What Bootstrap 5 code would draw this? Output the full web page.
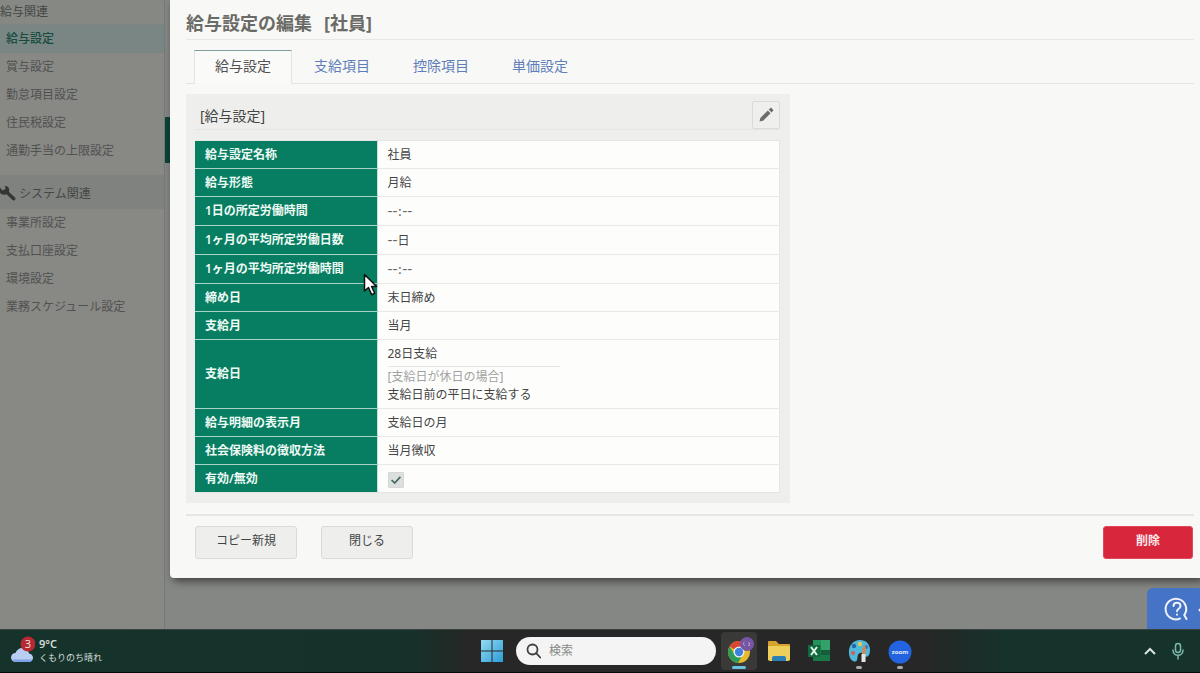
<!DOCTYPE html>
<html lang="ja">
<head>
<meta charset="utf-8">
<meta name="viewport" content="width=device-width, initial-scale=1">
<title>給与設定の編集</title>
<link href="https://cdn.jsdelivr.net/npm/bootstrap@5.3.0/dist/css/bootstrap.min.css" rel="stylesheet">
<style>
  body { font: 12px/18px "Noto Sans", "Noto Sans CJK JP", sans-serif; color: #444; background: #858784; }
  button, input { font: inherit; }

  /* dimmed application behind the dialog */
  .side-menu { flex: 0 0 165px; background: #888885; border-right: 1px solid #777976; }
  .side-head { background: #80827f; color: #454745; height: 34px; }
  .side-head.clipped { height: 25px; background: #868884; border-bottom: 1px solid #7f8380; }
  .side-group { margin-top: 10px; }
  .side-menu a { display: block; height: 28px; line-height: 28px; padding-left: 6px; color: #505250; text-decoration: none; }
  .side-menu a.current { background: #7a8683; color: #154c40; font-weight: 500; }
  .gutter { flex: 0 0 5px; padding-top: 117px; }
  .gutter span { display: block; height: 46px; background: #0c4337; }

  /* dialog */
  .dialog-sheet { background: #f8f9f6; border-bottom-left-radius: 4px; padding: 0 6px 19px 16px; box-shadow: 3px 3px 8px rgba(0,0,0,.55); }
  .dialog-title { font-size: 18px; line-height: 28px; font-weight: 700; color: #6a6b67; margin: 0; padding: 9px 0 2px; border-bottom: 1px solid #e6e8e6; }
  .nav-tabs { --bs-nav-tabs-border-color: #e3e6e4; padding: 10px 0 0 8px; gap: 1px; }
  .nav-tabs .nav-link { font-size: 14px; line-height: 20px; padding: 5px 20px 7px; border-radius: 0; color: #5f7dba; border-width: 1px; }
  .nav-tabs .nav-link.active { background: #fafbf9; color: #505050; border-color: #e0e4e3; border-top: 1px solid #809c9c; border-bottom-color: #f8f9f6; }
  .setting-panel { max-width: 604px; background: #eeeeec; padding: 7px 10px 10px 9px; margin-top: 10px; }
  .panel-top { border-bottom: 1px solid #e4e6e5; margin-bottom: 10px; }
  .panel-top h2 { font-size: 14px; line-height: 20px; margin: 0; font-weight: 400; padding: 2px 0 0 5px; }
  .edit-btn { width: 28px; height: 28px; padding: 0; border: 1px solid #d9dcdb; border-radius: 2px; background: #efefed; line-height: 0; }

  .setting-table { width: 100%; border: 1px solid #e4e6e5; border-left: 0; background: #fdfefc; }
  .setting-table th { width: 182px; height: 28px; background: #077d61; color: #eefaf5; font-weight: 600; padding: 0 10px; border-bottom: 1px solid #a9d3c6; border-right: 1px solid #c8ded7; }
  .setting-table td { padding: 0 10px; border-bottom: 1px solid #e6e9e7; }
  .setting-table .taller th { height: 29px; }
  .setting-table tr:last-child > * { border-bottom: 0; }
  .unset { font: 14px/18px "DejaVu Sans", sans-serif; color: #666; }
  .pay-day { width: 172px; padding: 5px 0 3px; margin-bottom: 1px; border-bottom: 1px solid #e4e6e4; }
  .rest-day { color: #a0a19f; }
  .setting-table .form-check-input { width: 16px; height: 16px; border: 1px solid #d4d9d8; border-radius: 1px; margin: 2px 0 0; display: block; }
  .setting-table .form-check-input:checked { background-color: #dcdfde; background-image: url("data:image/svg+xml,%3csvg xmlns='http://www.w3.org/2000/svg' viewBox='0 0 16 16'%3e%3cpath fill='none' stroke='%23456b65' stroke-width='2' d='M3 8l3.500 3.500L13 4.500'/%3e%3c/svg%3e"); background-size: contain; }

  .dialog-foot { margin-top: 11px; border-top: 2px solid #e4e7e5; padding: 10px 1px 0 9px; }
  .foot-btn { height: 33px; line-height: 16px; font-size: 12px; padding: 0 20px 3px; border: 1px solid #d8dbda; border-radius: 3px; background: #eeefed; color: #444; }
  .foot-btn.closer { padding-left: 27px; padding-right: 27px; }
  .foot-btn.remove { padding-left: 32px; padding-right: 32px; background: #d8263c; border-color: #e0495b; color: #fbe9eb; font-weight: 600; }

  .help-tab { right: 0; bottom: 0; width: 53px; height: 41px; background: #4573c6; border: 0; border-top-left-radius: 6px; padding: 0 0 0 17px; text-align: left; }
  .pointer { left: 363px; top: 273px; pointer-events: none; }

  /* taskbar */
  .task-bar { height: 44px; background: linear-gradient(90deg, #15332b 0, #16312a 34%, #262726 39%, #262726 77%, #15322b 84%, #15332b 100%); border-top: 1px solid #3a4240; border-bottom: 1px solid #060807; }
  .task-left { flex: 0 0 40%; padding-left: 9px; color: #d5dcda; font-size: 11px; line-height: 14px; }
  .forecast { font-size: 9px; }
  .search-pill { width: 200px; height: 28px; border-radius: 14px; background: #f3f4f3; padding: 0 10px; margin: 0 5px 0 12px; }
  .search-pill input { width: 140px; border: 0; background: none; outline: 0; padding: 0; }
  .search-pill input::placeholder { color: #868886; opacity: 1; }
  .task-icon { width: 36px; height: 38px; border: 0; border-radius: 4px; background: none; padding: 0; line-height: 0; }
  .task-icon.open { background: #393938; }
</style>
</head>
<body class="d-flex flex-column min-vh-100">

<div class="d-flex flex-grow-1 position-relative">
  <nav class="side-menu" aria-label="設定メニュー">
    <div class="side-head clipped d-flex align-items-center">給与関連</div>
    <a class="current" href="#">給与設定</a>
    <a href="#">賞与設定</a>
    <a href="#">勤怠項目設定</a>
    <a href="#">住民税設定</a>
    <a href="#">通勤手当の上限設定</a>
    <div class="side-head side-group d-flex align-items-center pt-1">
      <svg width="19" height="18" viewBox="0 0 19 18" aria-hidden="true"><path fill="#343634" d="M0 2.500 2.500 5.500 5.500 4 5 .8C8 1 10 3.500 9 7l6 5.500c1.500 1.500-.8 4-2.500 2.500L6.500 9.200C3.500 10.500 1 9.500 0 7.500z"/></svg>
      <span>システム関連</span>
    </div>
    <a href="#">事業所設定</a>
    <a href="#">支払口座設定</a>
    <a href="#">環境設定</a>
    <a href="#">業務スケジュール設定</a>
  </nav>
  <div class="gutter"><span></span></div>

  <main class="flex-grow-1 pb-5">
    <section class="dialog-sheet">
      <h1 class="dialog-title">給与設定の編集&ensp;&thinsp;[社員]</h1>
      <ul class="nav nav-tabs">
        <li class="nav-item"><a class="nav-link active" href="#" aria-current="page">給与設定</a></li>
        <li class="nav-item"><a class="nav-link" href="#">支給項目</a></li>
        <li class="nav-item"><a class="nav-link" href="#">控除項目</a></li>
        <li class="nav-item"><a class="nav-link" href="#">単価設定</a></li>
      </ul>

      <div class="setting-panel">
        <div class="panel-top d-flex align-items-center justify-content-between">
          <h2>[給与設定]</h2>
          <button class="edit-btn" type="button" aria-label="編集">
            <svg width="18" height="18" viewBox="0 0 18 18"><path fill="#6c6e6c" d="M2.500 15.500l.8-3.600L10.800 4.500l2.800 2.800-7.500 7.400zM11.700 3.600l1.500-1.400c.6-.5 1-.5 1.500 0l1.200 1.200c.5.500.5 1 0 1.500l-1.400 1.500z"/></svg>
          </button>
        </div>
        <table class="setting-table">
          <tbody>
            <tr><th scope="row">給与設定名称</th><td>社員</td></tr>
            <tr><th scope="row">給与形態</th><td>月給</td></tr>
            <tr class="taller"><th scope="row">1日の所定労働時間</th><td><span class="unset">--:--</span></td></tr>
            <tr class="taller"><th scope="row">1ヶ月の平均所定労働日数</th><td><span class="unset">--</span>日</td></tr>
            <tr class="taller"><th scope="row">1ヶ月の平均所定労働時間</th><td><span class="unset">--:--</span></td></tr>
            <tr><th scope="row">締め日</th><td>末日締め</td></tr>
            <tr><th scope="row">支給月</th><td>当月</td></tr>
            <tr><th scope="row">支給日</th><td>
              <div class="pay-day">28日支給</div>
              <div class="rest-day">[支給日が休日の場合]</div>
              <div class="mb-1">支給日前の平日に支給する</div>
            </td></tr>
            <tr><th scope="row">給与明細の表示月</th><td>支給日の月</td></tr>
            <tr><th scope="row">社会保険料の徴収方法</th><td>当月徴収</td></tr>
            <tr><th scope="row"><label for="active-flag">有効/無効</label></th><td><input class="form-check-input" type="checkbox" id="active-flag" checked></td></tr>
          </tbody>
        </table>
      </div>

      <div class="dialog-foot d-flex align-items-center">
        <button class="foot-btn" type="button">コピー新規</button>
        <button class="foot-btn closer ms-4" type="button">閉じる</button>
        <button class="foot-btn remove ms-auto" type="button">削除</button>
      </div>
    </section>
  </main>

  <button class="help-tab position-absolute" type="button" aria-label="ヘルプ">
    <svg width="36" height="28" viewBox="0 0 36 28" fill="none" stroke="#eef3fb" stroke-width="2" stroke-linecap="round"><path d="M16 23.500A10.300 10.300 0 1 1 20.300 20L22.500 24M9.500 11c0-4.500 7-4.500 7 0 0 2.800-3.500 2.600-3.500 5.200M13 19.500v.2"/><circle cx="36" cy="15" r="1.500" fill="#eef3fb" stroke="none"/></svg>
  </button>
  <svg class="pointer position-absolute" width="15" height="24" viewBox="0 0 15 24"><path fill="#fff" stroke="#111" stroke-width="1.500" stroke-linejoin="round" d="M1.500 1.500v16.500l4-3.500 3.200 7.200 3-1.400-3.100-6.800h5z"/></svg>
</div>

<footer class="task-bar d-flex align-items-center">
  <div class="task-left d-flex align-items-center">
    <svg width="26" height="32" viewBox="0 0 26 32" aria-hidden="true"><path fill="#b9cdf2" d="M7 27c-3 0-5-1.800-5-4.500S4 18 6.500 18C7.500 15 10 13 13.500 13s6 2 6.500 5.500c2.500.3 4 2 4 4.200 0 2.600-2 4.300-4.500 4.300z"/><path fill="#7da2e5" d="M3 24.500c1 1.700 2.500 2.500 4 2.500h12.500c2 0 3.500-.8 4-2.500z"/><circle cx="19" cy="9" r="7.500" fill="#b62932"/><text x="19" y="13" text-anchor="middle" font-size="11" fill="#f3dede">3</text></svg>
    <div class="ms-1"><div class="fw-semibold">9°C</div><div class="forecast">くもりのち晴れ</div></div>
  </div>
  <svg width="24" height="24" viewBox="0 0 24 24" aria-hidden="true"><defs><linearGradient id="winTint" x1="0" y1="0" x2="1" y2="1"><stop offset="0" stop-color="#94dcf1"/><stop offset="1" stop-color="#2b9bd8"/></linearGradient></defs><path fill="url(#winTint)" d="M1 1h10.500v10.500H1zM12.500 1H23v10.500H12.500zM1 12.500h10.500V23H1zM12.500 12.500H23V23H12.500z"/></svg>
  <label class="search-pill d-flex align-items-center gap-2">
    <svg width="15" height="16" viewBox="0 0 15 16" fill="none" stroke="#3e403f" stroke-width="1.800" stroke-linecap="round"><circle cx="6.500" cy="6.500" r="5"/><path d="M10.200 10.200l4 4.300"/></svg>
    <input type="search" placeholder="検索" aria-label="検索">
  </label>
  <div class="d-flex gap-1">
    <button class="task-icon open" type="button" aria-label="Chrome"><svg width="36" height="38" viewBox="0 0 36 38"><circle cx="18" cy="20" r="11" fill="#e9b92d"/><path fill="#d84436" d="M18 20 8.500 14.500A11 11 0 0 1 27.500 14.500L27.500 15.500H18z"/><path fill="#2e9b59" d="M8.500 14.500A11 11 0 0 0 17 31l5-8.500-4-2.500-4.500 2z"/><circle cx="18" cy="20" r="5.500" fill="#eef2f3"/><circle cx="18" cy="20" r="4.200" fill="#3e82dc"/><circle cx="26" cy="12" r="7" fill="#7656a3"/><path d="M23.500 10c-1.500.5-1.500 3.500.5 3.500M27 11h1.500v2.500H27" fill="none" stroke="#b69cd0"/><rect x="11" y="34" width="14" height="3" rx="1.500" fill="#68c1df"/></svg></button>
    <button class="task-icon" type="button" aria-label="エクスプローラー"><svg width="36" height="38" viewBox="0 0 36 38"><path fill="#d5a22f" d="M7 10q0-1 1-1h7l3 3h10q1 0 1 1v15H7z"/><path fill="#efcf5c" d="M7 14h22v13q0 2-2 2H9q-2 0-2-2z"/><path fill="#2b7fb7" d="M11 29v-3q0-2 2-2h10q2 0 2 2v3z"/></svg></button>
    <button class="task-icon" type="button" aria-label="Excel"><svg width="36" height="38" viewBox="0 0 36 38"><path fill="#197848" d="M12 8h17v21H12z"/><path fill="#32a269" d="M20 8h9v10h-9z"/><path fill="#239359" d="M12 8h8v5h-8z"/><path fill="#145e3a" d="M20 18h9v5h-9z"/><path fill="#11693f" d="M7 13h12v12H7z"/><path d="M10 15l6 8M16 15l-6 8" stroke="#e3f5eb" stroke-width="2"/></svg></button>
    <button class="task-icon" type="button" aria-label="ペイント"><svg width="36" height="38" viewBox="0 0 36 38"><path fill="#50b9db" d="M8 22C7 13 13 8 19 8s10 4 10 10-3 8-5 6-2-4-5-3-2 4-3 7-7 2-8-6z"/><circle cx="13" cy="14" r="2.200" fill="#2568a5"/><circle cx="19" cy="12" r="2.200" fill="#e4c757"/><circle cx="25" cy="15" r="2" fill="#3775ba"/><circle cx="12" cy="21" r="2" fill="#d55b4d"/><path fill="#c98b5e" d="M21 17l3-5 1 6-1 12h-3z"/><path fill="#e2e6e6" d="M20.500 22h4v8h-4z"/><rect x="15" y="34" width="6" height="3" rx="1.500" fill="#aaa"/></svg></button>
    <button class="task-icon" type="button" aria-label="Zoom"><svg width="36" height="38" viewBox="0 0 36 38"><circle cx="19" cy="20" r="11.500" fill="#2463df"/><text x="19" y="22" text-anchor="middle" font-size="6" font-weight="700" fill="#e5edfc">zoom</text><rect x="16" y="34" width="6" height="3" rx="1.500" fill="#aaa"/></svg></button>
  </div>
  <div class="ms-auto d-flex align-items-center gap-3 pe-3">
    <svg width="12" height="8" viewBox="0 0 12 8" fill="none" stroke="#dce3e0" stroke-width="2"><path d="M1 7l5-5 5 5"/></svg>
    <svg width="12" height="18" viewBox="0 0 12 18" fill="none" stroke="#7bb9aa" stroke-width="1.500" stroke-linecap="round"><rect x="3.500" y="1.500" width="5" height="9" rx="2.500"/><path d="M1 8c0 7 10 7 10 0M6 13.500V17"/></svg>
  </div>
</footer>

<script src="https://cdn.jsdelivr.net/npm/bootstrap@5.3.0/dist/js/bootstrap.bundle.min.js"></script>
</body>
</html>
